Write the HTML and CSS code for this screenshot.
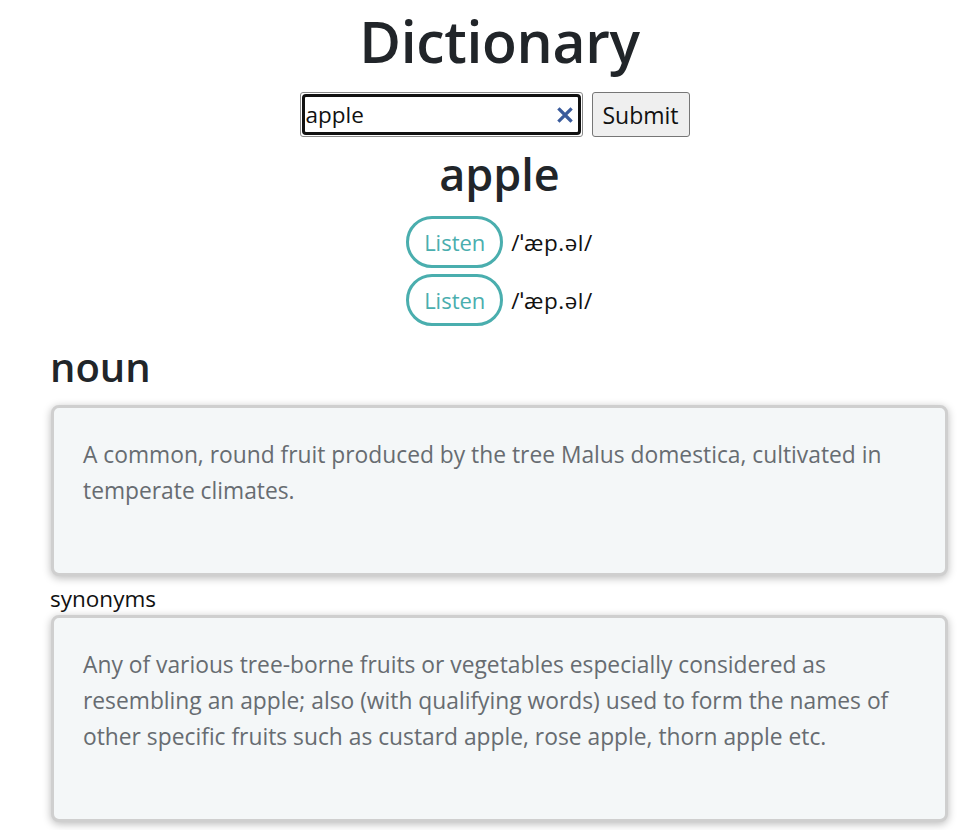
FILE: index.html
```html
<!DOCTYPE html>
<html lang="en">
<head>
<meta charset="utf-8">
<title>Dictionary</title>
<link rel="stylesheet" href="styles.css">
</head>
<body>
<main class="page">
  <h1 class="title">Dictionary</h1>
  <form class="search">
    <div class="search-box">
      <input class="search-input" type="text" value="apple">
      <span class="clear-icon">
        <svg width="16" height="16" viewBox="0 0 16 16"><path d="M2.5 2.5 L13.5 13.5 M13.5 2.5 L2.5 13.5" stroke="#3a5b9c" stroke-width="3.2" stroke-linecap="square"/></svg>
      </span>
    </div>
    <button class="submit" type="button">Submit</button>
  </form>
  <h2 class="word">apple</h2>
  <div class="phonetics">
    <div class="phonetic"><button class="listen" type="button">Listen</button><span class="ipa">/ˈæp.əl/</span></div>
    <div class="phonetic"><button class="listen" type="button">Listen</button><span class="ipa">/ˈæp.əl/</span></div>
  </div>
  <section class="meaning">
    <h3 class="pos">noun</h3>
    <div class="card">
      <p>A common, round fruit produced by the tree Malus domestica, cultivated in temperate climates.</p>
    </div>
    <div class="syn-label">synonyms</div>
    <div class="card">
      <p>Any of various tree-borne fruits or vegetables especially considered as resembling an apple; also (with qualifying words) used to form the names of other specific fruits such as custard apple, rose apple, thorn apple etc.</p>
    </div>
  </section>
</main>
</body>
</html>
```

FILE: styles.css
```css
html, body {
  margin: 0;
  padding: 0;
  background: #fff;
}
body {
  font-family: "Open Sans", "Noto Sans", "Liberation Sans", sans-serif;
  color: #212529;
  font-size: 20px;
}
.page {
  padding: 0 27px 40px 51px;
  display: flex;
  flex-direction: column;
}
.title {
  margin: 3px 0 0;
  text-align: center;
  font-size: 57px;
  font-weight: 600;
  line-height: 76px;
  letter-spacing: -0.3px;
}
.search {
  margin-top: 13px;
  padding-right: 10px;
  display: flex;
  justify-content: center;
  gap: 9px;
}
.search-box {
  position: relative;
  width: 283px;
  height: 45px;
  box-sizing: border-box;
  border: 1px solid #8a8a8a;
  border-radius: 3px;
  padding: 1px;
}
.search-input {
  width: 100%;
  height: 100%;
  box-sizing: border-box;
  border: 3px solid #111;
  border-radius: 4px;
  outline: none;
  padding: 0 30px 0 1px;
  font-family: inherit;
  font-size: 22.5px;
  color: #111;
  background: #fff;
}
.clear-icon {
  position: absolute;
  right: 9px;
  top: 14px;
  width: 16px;
  height: 16px;
  display: block;
}
.clear-icon svg { display: block; }
.submit {
  height: 45px;
  width: 98px;
  box-sizing: border-box;
  border: 1px solid #767676;
  border-radius: 3px;
  background: #efefef;
  font-family: inherit;
  font-size: 23px;
  color: #111;
  padding: 0;
}
.word {
  margin: 9px 0 0;
  text-align: center;
  font-size: 45px;
  font-weight: 600;
  line-height: 56px;
}
.phonetics {
  margin-top: 14px;
  display: flex;
  flex-direction: column;
  gap: 6px;
  align-items: center;
}
.phonetic {
  display: flex;
  align-items: center;
  gap: 8px;
}
.listen {
  width: 97px;
  height: 52px;
  box-sizing: border-box;
  border: 3px solid #4aaeae;
  border-radius: 26px;
  background: #fff;
  color: #4aaeae;
  font-family: inherit;
  font-size: 22px;
  padding: 0;
}
.ipa {
  font-size: 22.5px;
  letter-spacing: 0.5px;
  color: #111;
}
.meaning {
  margin-top: 16px;
  display: flex;
  flex-direction: column;
}
.pos {
  margin: 0 0 13px -1px;
  font-size: 40px;
  font-weight: 600;
  line-height: 50px;
}
.card {
  background: #f4f7f8;
  border: 3px solid #cfcfcf;
  border-radius: 8px;
  box-shadow: 0 2px 8px rgba(0, 0, 0, 0.28);
  padding: 29px 29px 46px;
}
.card p {
  margin: 0 0 18px;
  font-size: 22.8px;
  line-height: 36px;
  color: #676c71;
}
.syn-label {
  margin: 10px 0 3px -1px;
  font-size: 22.5px;
  line-height: 26px;
  color: #111;
}
```
